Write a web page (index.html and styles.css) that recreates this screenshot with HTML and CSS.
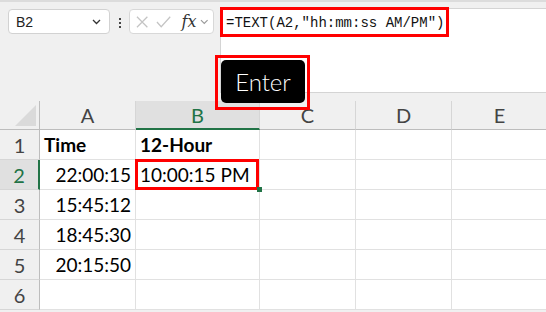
FILE: index.html
```html
<!DOCTYPE html>
<html lang="en">
<head>
    <meta charset="UTF-8">
    <title>TEXT function - 12 hour time</title>
    <link rel="stylesheet" href="styles.css">
</head>
<body>
    <div class="sheet">
        <!-- formula bar -->
        <div class="toolbar">
            <div class="name-box">
                <span>B2</span>
                <svg width="9" height="6" viewBox="0 0 9 6"><path d="M1 1 L4.5 4.5 L8 1" fill="none" stroke="#333" stroke-width="1.3"/></svg>
            </div>
            <div class="dots"><i></i><i></i><i></i></div>
            <div class="fx-box">
                <svg width="13" height="12" viewBox="0 0 13 12"><path d="M1 0.5 L12 11.5 M12 0.5 L1 11.5" stroke="#c4c4c4" stroke-width="1.3"/></svg>
                <svg width="16" height="12" viewBox="0 0 16 12"><path d="M1 6 L5.5 11 L15 0.5" fill="none" stroke="#c4c4c4" stroke-width="1.3"/></svg>
                <span class="fx">fx</span>
                <svg width="9" height="6" viewBox="0 0 9 6"><path d="M1 1 L4.5 4.5 L8 1" fill="none" stroke="#999" stroke-width="1.2"/></svg>
            </div>
            <div class="formula">
                <div class="formula-text">=TEXT(A2,"hh:mm:ss AM/PM")</div>
            </div>
        </div>

        <div class="enter-key"><div class="key">Enter</div></div>

        <!-- grid -->
        <div class="grid">
            <div class="hd corner"><span class="tri"></span></div>
            <div class="hd col">A</div>
            <div class="hd col active">B</div>
            <div class="hd col">C</div>
            <div class="hd col">D</div>
            <div class="hd col">E</div>

            <div class="hd row">1</div>
            <div class="cell bold">Time</div>
            <div class="cell bold">12-Hour</div>
            <div class="cell"></div><div class="cell"></div><div class="cell"></div>

            <div class="hd row active">2</div>
            <div class="cell num">22:00:15</div>
            <div class="cell sel">10:00:15 PM</div>
            <div class="cell"></div><div class="cell"></div><div class="cell"></div>

            <div class="hd row">3</div>
            <div class="cell num">15:45:12</div>
            <div class="cell"></div><div class="cell"></div><div class="cell"></div><div class="cell"></div>

            <div class="hd row">4</div>
            <div class="cell num">18:45:30</div>
            <div class="cell"></div><div class="cell"></div><div class="cell"></div><div class="cell"></div>

            <div class="hd row">5</div>
            <div class="cell num">20:15:50</div>
            <div class="cell"></div><div class="cell"></div><div class="cell"></div><div class="cell"></div>

            <div class="hd row">6</div>
            <div class="cell"></div><div class="cell"></div><div class="cell"></div><div class="cell"></div><div class="cell"></div>
        </div>
    </div>
</body>
</html>
```

FILE: styles.css
```css
/* Page */
body {
    margin: 0;
    width: 546px;
    height: 312px;
    overflow: hidden;
    background: #f0f0f0;
    font-family: 'Lato', sans-serif;
}

.sheet {
    position: relative;
    border-top: 2px solid #dcdcdc;
}

/* Formula bar */
.toolbar {
    display: flex;
    align-items: flex-start;
    height: 91px;
}

.name-box {
    display: flex;
    align-items: center;
    justify-content: space-between;
    box-sizing: border-box;
    width: 102px;
    height: 25px;
    margin: 7px 0 0 8px;
    padding: 0 8px 0 7px;
    background: #fff;
    border: 1px solid #d2d2d2;
    border-radius: 4px;
    font-family: 'Liberation Sans', sans-serif;
    font-size: 14px;
    color: #222;
}

.dots {
    display: flex;
    flex-direction: column;
    gap: 2px;
    margin: 16px 0 0 9px;
}

.dots i {
    width: 2px;
    height: 2px;
    background: #444;
}

.fx-box {
    display: flex;
    align-items: center;
    box-sizing: border-box;
    width: 85px;
    height: 25px;
    margin: 7px 0 0 8px;
    padding: 0 4px 0 6px;
    gap: 8px;
    background: #fff;
    border: 1px solid #d8d8d8;
    border-radius: 4px;
}

.fx {
    font-family: 'DejaVu Serif', serif;
    font-style: italic;
    font-size: 16px;
    color: #333;
    margin-left: 2px;
    margin-right: -4px;
}

.formula {
    flex: 1;
    box-sizing: border-box;
    height: 85px;
    margin: 6px 0 0 6px;
    background: #fff;
    border-top: 1px solid #d4d4d4;
    border-bottom: 1px solid #d4d4d4;
    border-left: 1px solid #d4d4d4;
}

.formula-text {
    box-sizing: border-box;
    width: 229px;
    height: 30px;
    margin: -2px 0 0 -1px;
    padding: 5px 0 0 3px;
    border: 3px solid #f00;
    font-family: 'Liberation Mono', monospace;
    font-size: 14px;
    color: #111;
}

/* Enter key overlay */
.enter-key {
    position: absolute;
    left: 215px;
    top: 53px;
    width: 95px;
    height: 55px;
    box-sizing: border-box;
    border: 3px solid #f00;
    padding: 2px 2px 4px 3px;
    z-index: 2;
}

.key {
    height: 100%;
    background: #000;
    border-radius: 5px;
    color: #fff;
    font-family: 'Lato', sans-serif;
    font-weight: 300;
    font-size: 24px;
    display: flex;
    align-items: center;
    justify-content: center;
}

/* Grid */
.grid {
    display: grid;
    grid-template-columns: 40px 96px 124px 96px 96px 96px;
    grid-template-rows: 29px repeat(6, 30px);
    margin-top: 8px;
    background: #fff;
}

.hd {
    box-sizing: border-box;
    background: #f0f0f0;
    color: #444;
    font-size: 20px;
    display: flex;
    align-items: center;
    justify-content: center;
}

.col {
    border-right: 1px solid #d6d6d6;
    border-bottom: 1px solid #bdbdbd;
}

.row {
    border-right: 1px solid #bdbdbd;
    border-bottom: 1px solid #d6d6d6;
}

.corner {
    position: relative;
    border-right: 1px solid #bdbdbd;
    border-bottom: 1px solid #bdbdbd;
}

.tri {
    position: absolute;
    right: 3px;
    bottom: 3px;
    width: 0;
    height: 0;
    border-left: 21px solid transparent;
    border-bottom: 21px solid #dadada;
}

.col.active {
    background: #e0e0e0;
    color: #217346;
    border-bottom: 2px solid #217346;
}

.row.active {
    background: #e0e0e0;
    color: #217346;
    border-right: 2px solid #217346;
}

.cell {
    box-sizing: border-box;
    border-right: 1px solid #e1e1e1;
    border-bottom: 1px solid #e1e1e1;
    font-size: 19px;
    color: #000;
    padding: 0 4px;
    display: flex;
    align-items: center;
}

.bold {
    font-weight: bold;
}

.num {
    justify-content: flex-end;
}

.sel {
    position: relative;
}

.sel::before {
    content: "";
    position: absolute;
    top: -1px;
    left: -1px;
    right: 0;
    bottom: -1px;
    border: 3px solid #f00;
}

.sel::after {
    content: "";
    position: absolute;
    right: -3px;
    bottom: -3px;
    width: 5px;
    height: 5px;
    background: #217346;
}
```
